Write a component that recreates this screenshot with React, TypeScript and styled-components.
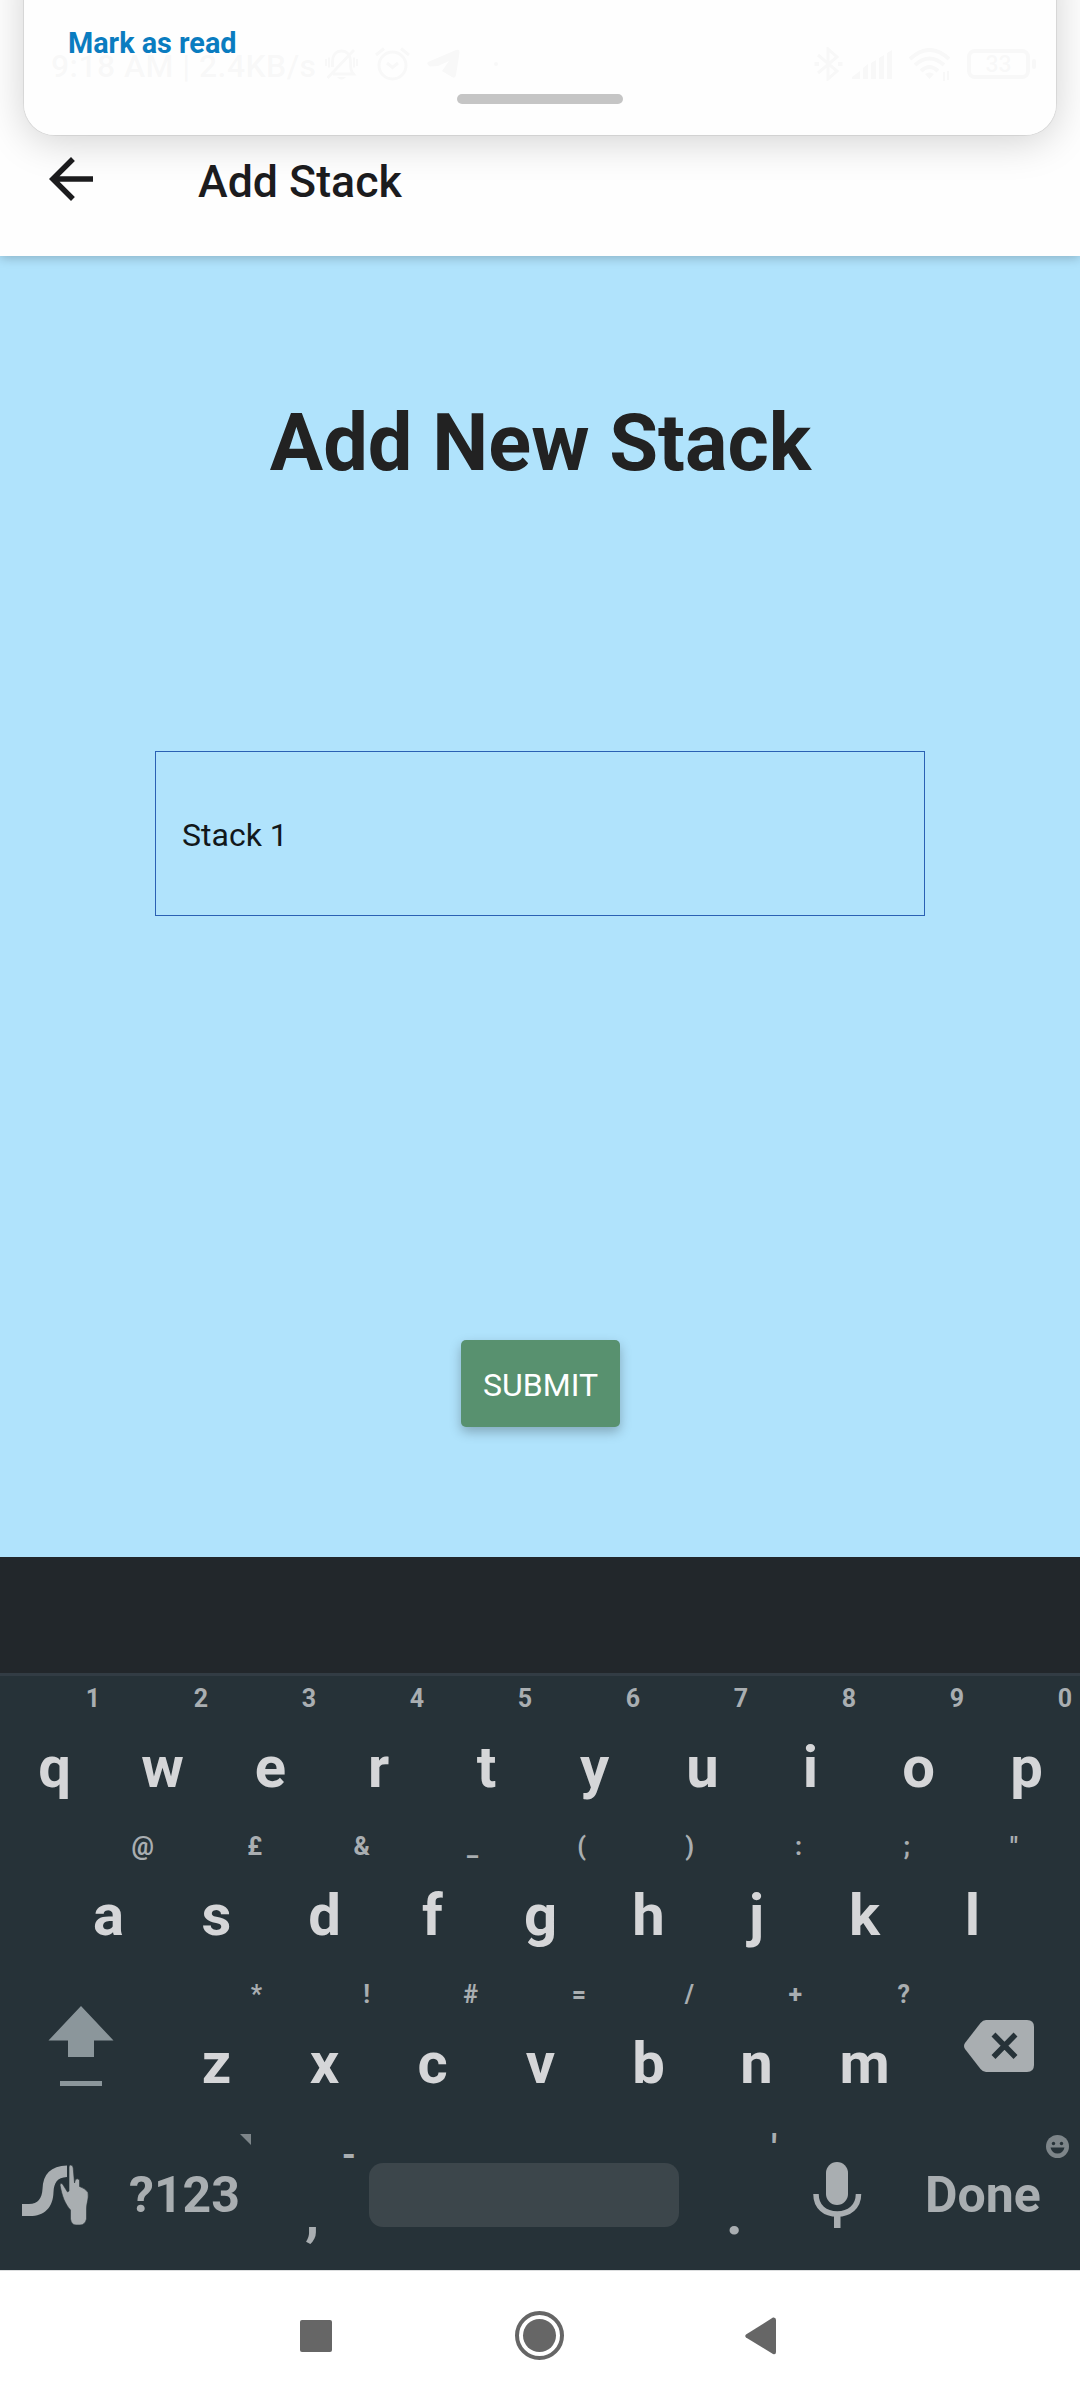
import React from 'react';
import styled, { createGlobalStyle } from 'styled-components';

const GlobalStyle = createGlobalStyle`
  * { box-sizing: border-box; }
  html, body { margin: 0; padding: 0; background: #fff; }
  body { font-family: Roboto, "Liberation Sans", sans-serif; }
`;

const Screen = styled.div`
  position: relative;
  width: 1080px;
  height: 2400px;
  display: flex;
  flex-direction: column;
  overflow: hidden;
  background: #fff;
`;

/* ---------- header ---------- */

const Header = styled.header`
  flex: none;
  height: 256px;
  z-index: 1;
  background: #fefefe;
  box-shadow: 0 2px 10px rgba(0, 0, 0, 0.22);
`;

const StatusBar = styled.div`
  height: 102px;
  padding: 26px 45px 0 51px;
  display: flex;
  align-items: center;
  justify-content: space-between;
  color: #222;
`;

const StatusGroup = styled.div`
  display: flex;
  align-items: center;
`;

const Clock = styled.span`
  width: 274px;
  font-size: 32px;
  line-height: 40px;
  font-weight: 500;
  white-space: nowrap;
  padding-top: 4px;
  letter-spacing: 0.4px;
`;

const StatusIcon = styled.svg<{ $gap?: number }>`
  display: block;
  flex: none;
  margin-left: ${(p) => p.$gap ?? 0}px;
`;

const Battery = styled.span`
  position: relative;
  width: 63px;
  height: 30px;
  margin: 0 5px 0 16px;
  border: 4px solid #222;
  border-radius: 8px;
  font-size: 23px;
  line-height: 24px;
  font-weight: 500;
  text-align: center;

  &::after {
    content: '';
    position: absolute;
    right: -10px;
    top: 6px;
    width: 4px;
    height: 10px;
    border-radius: 2px;
    background: #222;
  }
`;

const Toolbar = styled.div`
  height: 154px;
  padding-left: 38px;
  display: flex;
  align-items: center;
`;

const Title = styled.h2`
  margin: 5px 0 0 94px;
  font-size: 44.7px;
  line-height: 56px;
  font-weight: 500;
  color: #1c1c1e;
`;

/* Notification shade sliding over the status bar */
const Shade = styled.div`
  position: absolute;
  z-index: 2;
  left: 24px;
  top: -60px;
  width: 1032px;
  height: 195px;
  padding: 77px 16px 24px;
  border-radius: 31px;
  background: rgba(254, 254, 254, 0.972);
  box-shadow: 0 0 0 1px rgba(0, 0, 0, 0.07), 0 6px 40px rgba(0, 0, 0, 0.18);
`;

const ShadeAction = styled.div`
  padding-left: 28px;
  margin-top: 8px;
  font-size: 28.8px;
  line-height: 36px;
  font-weight: 700;
  color: #0a7cc0;
`;

const Handle = styled.div`
  width: 166px;
  height: 10px;
  margin: 33px auto 0;
  border-radius: 5px;
  background: #c5c5c5;
`;

/* ---------- form ---------- */

const Form = styled.main`
  flex: none;
  height: 1301px;
  padding-top: 137px;
  display: flex;
  flex-direction: column;
  align-items: center;
  background: #b0e3fc;
`;

const Heading = styled.h1`
  margin: 0 0 0 1px;
  font-size: 79.4px;
  line-height: 100px;
  font-weight: 700;
  color: #222;
`;

const Field = styled.div`
  width: 770px;
  height: 165px;
  margin-top: 258px;
  padding: 2px 0 0 26px;
  display: flex;
  align-items: center;
  border: 1px solid #2a61b4;
  font-size: 32px;
  line-height: 40px;
  color: #12181b;
`;

const Submit = styled.button`
  width: 159px;
  height: 87px;
  margin: 424px 0 0 1px;
  padding: 2px 0 0;
  border: 0;
  border-radius: 5px;
  background: #58916f;
  box-shadow: 0 5px 12px rgba(0, 0, 0, 0.26);
  font: 400 32px/40px Roboto, "Liberation Sans", sans-serif;
  color: #fff;
`;

/* ---------- keyboard ---------- */

const Keyboard = styled.section`
  flex: none;
  height: 713px;
  background: #263238;
  color: #a9aeb1;
`;

const Suggestions = styled.div`
  height: 119px;
  background: #22272b;
  border-bottom: 3px solid #323c44;
`;

const KeyRows = styled.div`
  margin-top: -2px;
`;

const KeyRow = styled.div<{ $inset?: number }>`
  height: 148px;
  padding: 0 ${(p) => p.$inset ?? 0}px;
  display: flex;
`;

const Key = styled.div`
  width: 108px;
  height: 148px;
  padding-top: 10px;
  display: flex;
  flex-direction: column;
`;

const Hint = styled.span`
  height: 30px;
  padding-right: 8px;
  text-align: right;
  font-size: 25px;
  line-height: 30px;
  font-weight: 700;
`;

const Letter = styled.span`
  margin-top: 19px;
  padding-left: 1px;
  text-align: center;
  font-size: 58px;
  line-height: 68px;
  font-weight: 700;
  color: #d5d6d8;
`;

const IconKey = styled.div<{ $w: number; $top: number; $left: number }>`
  flex: none;
  width: ${(p) => p.$w}px;
  padding: ${(p) => p.$top}px 0 0 ${(p) => p.$left}px;

  svg { display: block; }
`;

const WordKey = styled.div<{ $w: number }>`
  flex: none;
  width: ${(p) => p.$w}px;
  height: 148px;
  padding-top: 16px;
`;

const WordHint = styled.div`
  height: 31px;
  display: flex;
  justify-content: flex-end;
  align-items: flex-start;
`;

const Word = styled.div<{ $left: number }>`
  padding-left: ${(p) => p.$left}px;
  font-size: 50px;
  line-height: 60px;
  font-weight: 700;
`;

const PunctKey = styled.div<{ $w: number }>`
  flex: none;
  width: ${(p) => p.$w}px;
  height: 148px;
  font-weight: 700;
`;

const PunctHint = styled.div<{ $top: number; $right: number }>`
  height: 62px;
  padding: ${(p) => p.$top}px ${(p) => p.$right}px 0 0;
  text-align: right;
  font-size: 36px;
  line-height: 42px;
`;

const Punct = styled.div<{ $left: number }>`
  padding-left: ${(p) => p.$left}px;
  font-size: 58px;
  line-height: 68px;
`;

const SpaceBar = styled.div`
  width: 310px;
  height: 64px;
  border-radius: 14px;
  background: #3c464b;
`;

/* ---------- navigation ---------- */

const NavBar = styled.nav`
  flex: none;
  height: 130px;
  padding: 0 304px 0 300px;
  border-top: 1px solid #dcdedf;
  display: flex;
  align-items: center;
  justify-content: space-between;
  background: #fff;
`;

const topKeys = ['q1', 'w2', 'e3', 'r4', 't5', 'y6', 'u7', 'i8', 'o9', 'p0'];
const homeKeys = ['a@', 's£', 'd&', 'f_', 'g(', 'h)', 'j:', 'k;', 'l"'];
const bottomKeys = ['z*', 'x!', 'c#', 'v=', 'b/', 'n+', 'm?'];

const Keys = ({ keys }: { keys: string[] }) => (
  <>
    {keys.map(([letter, hint]) => (
      <Key key={letter}>
        <Hint>{hint}</Hint>
        <Letter>{letter}</Letter>
      </Key>
    ))}
  </>
);

export default function App() {
  return (
    <>
      <GlobalStyle />
      <Screen>
        <Header>
          <StatusBar>
            <StatusGroup>
              <Clock>9:18 AM | 2.4KB/s</Clock>
              <StatusIcon width="33" height="33" viewBox="0 0 33 33" fill="none" stroke="currentColor" strokeWidth="2.800">
                <path d="M8 26H28.500C26 23 25.500 21 25.500 14C25.500 7 22 3 16.500 3C11 3 7.500 7 7.500 14V19M29 2L2.500 30" />
                <path d="M1 11V18M4 9.500V19.500M32 11V18M29 9.500V19.500" strokeWidth="1.800" />
                <path d="M12 29H21Q16.500 34 12 29Z" fill="currentColor" stroke="none" />
              </StatusIcon>
              <StatusIcon $gap={17} width="35" height="34" viewBox="0 0 35 34" fill="none" stroke="currentColor" strokeWidth="3">
                <circle cx="17.500" cy="18.500" r="13.500" />
                <path d="M1 8L9 1.500M34 8L26 1.500M12 16L17.500 20.500L23 16" />
              </StatusIcon>
              <StatusIcon $gap={17} width="38" height="30" viewBox="0 0 38 30" fill="currentColor">
                <path d="M1 13L29 1Q33 -0.500 32.500 4L29 26Q28 30 25 28L15 22L22 12L11 17L3 17.500Q-1 15.500 1 13Z" />
              </StatusIcon>
              <StatusIcon $gap={29} width="4" height="4" viewBox="0 0 4 4" fill="currentColor">
                <circle cx="2" cy="2" r="2" />
              </StatusIcon>
            </StatusGroup>
            <StatusGroup>
              <StatusIcon width="29" height="34" viewBox="0 0 29 34" fill="none" stroke="currentColor" strokeWidth="3">
                <path d="M4 8L23 24L14 32V2L23 10L4 26" />
                <path d="M0.500 17H5M24 17H28.500" strokeWidth="4" />
              </StatusIcon>
              <StatusIcon $gap={9} width="41" height="29" viewBox="0 0 41 29" fill="currentColor">
                <path d="M0 29V27L8 21V29ZM11 29V18L16 14V29ZM19 29V13L24 10V29ZM27 29V8L32 5V29ZM35 29V3L40 0V29Z" />
              </StatusIcon>
              <StatusIcon $gap={16} width="42" height="33" viewBox="0 0 42 33" fill="none" stroke="currentColor" strokeWidth="4">
                <path d="M1 11Q20.500 -7 40 11M6 17Q20.500 4 35 17M12 23Q20.500 15 29 23" />
                <path d="M16 26Q20.500 23 25 26L20.500 31Z" fill="currentColor" stroke="none" />
                <path d="M35 24V33M39 23V32" strokeWidth="2" />
              </StatusIcon>
              <Battery>33</Battery>
            </StatusGroup>
          </StatusBar>
          <Toolbar>
            <svg width="66" height="66" viewBox="0 0 24 24" fill="#1c1c1e">
              <path d="M20 11H7.830l5.590-5.590L12 4l-8 8 8 8 1.410-1.410L7.830 13H20v-2z" />
            </svg>
            <Title>Add Stack</Title>
          </Toolbar>
        </Header>

        <Form>
          <Heading>Add New Stack</Heading>
          <Field>Stack 1</Field>
          <Submit>SUBMIT</Submit>
        </Form>

        <Keyboard>
          <Suggestions />
          <KeyRows>
            <KeyRow>
              <Keys keys={topKeys} />
            </KeyRow>
            <KeyRow $inset={54}>
              <Keys keys={homeKeys} />
            </KeyRow>
            <KeyRow>
              <IconKey $w={162} $top={36} $left={48}>
                <svg width="66" height="81" viewBox="0 0 66 81" fill="#8b969b">
                  <path d="M33 0L65.500 34.500H46V51H20V34.500H0.500ZM12 75H54V80H12Z" />
                </svg>
              </IconKey>
              <Keys keys={bottomKeys} />
              <IconKey $w={162} $top={50} $left={46}>
                <svg width="70" height="52" viewBox="0 0 70 52">
                  <path
                    d="M22 0H63Q70 0 70 7V45Q70 52 63 52H22Q19 52 16.500 49L1 29Q-1 26 1 23L16.500 3Q19 0 22 0Z"
                    fill="#a9aeb1"
                  />
                  <path d="M29.500 14.500L51.500 37M51.500 14.500L29.500 37" stroke="#263238" strokeWidth="5.500" />
                </svg>
              </IconKey>
            </KeyRow>
            <KeyRow>
              <IconKey $w={108} $top={47} $left={22}>
                <svg width="67" height="60" viewBox="0 0 67 60" fill="#a9aeb1">
                  <path d="M0 39H7C16 39 20 33 20.500 24C21 9 29 1 45 0.500V12C35 12.500 32 18 31.500 27C31 43 22 51 8 51H0Z" />
                  <path
                    d="M48.500 0Q51 0 51.200 3L52.500 18L53.500 14.500Q55.500 13 57.500 15V21.500Q63 23 66 27.500C67 34 64.500 38 64.500 44V54Q63 60 58 60H54Q49.500 60 48.500 54V45C43 39 40 31 38 20Q38.500 17 40.500 19L45.500 27L47 26V2Q47 0 48.500 0Z"
                    stroke="#263238"
                    strokeWidth="0.600"
                  />
                </svg>
              </IconKey>
              <WordKey $w={143}>
                <WordHint>
                  <svg width="11" height="11" viewBox="0 0 11 11" fill="#7d8589">
                    <path d="M0 0H11V11Z" />
                  </svg>
                </WordHint>
                <Word $left={21}>?123</Word>
              </WordKey>
              <PunctKey $w={105}>
                <PunctHint $top={16} $right={0}>-</PunctHint>
                <Punct $left={54}>,</Punct>
              </PunctKey>
              <IconKey $w={322} $top={45} $left={13}>
                <SpaceBar />
              </IconKey>
              <PunctKey $w={102}>
                <PunctHint $top={10} $right={3}>'</PunctHint>
                <Punct $left={48}>.</Punct>
              </PunctKey>
              <IconKey $w={120} $top={44} $left={33}>
                <svg width="49" height="66" viewBox="0 0 49 66">
                  <rect x="13" y="0" width="22" height="43" rx="11" fill="#a9aeb1" />
                  <path d="M3 32C3 45 12 52 24.300 52C36 52 45.500 45 45.500 32" fill="none" stroke="#a9aeb1" strokeWidth="5.500" />
                  <path d="M21 53H27.500V66H21Z" fill="#a9aeb1" />
                </svg>
              </IconKey>
              <WordKey $w={169}>
                <WordHint>
                  <svg width="23" height="24" viewBox="0 -1 23 24">
                    <circle cx="11.500" cy="11.500" r="11.500" fill="#7d8589" />
                    <circle cx="7.500" cy="8.500" r="1.700" fill="#263238" />
                    <circle cx="15.500" cy="8.500" r="1.700" fill="#263238" />
                    <path d="M4.500 12.500H18.500Q17 18.500 11.500 18.500Q6 18.500 4.500 12.500Z" fill="#263238" />
                  </svg>
                </WordHint>
                <Word $left={25}>Done</Word>
              </WordKey>
            </KeyRow>
          </KeyRows>
        </Keyboard>

        <NavBar>
          <svg width="33" height="32" viewBox="0 0 33 32" fill="#666">
            <rect width="32" height="32" rx="2" />
          </svg>
          <svg width="49" height="49" viewBox="0 0 49 49">
            <circle cx="24.500" cy="24.500" r="22.500" fill="none" stroke="#666" strokeWidth="4" />
            <circle cx="24.500" cy="24.500" r="16.500" fill="#666" />
          </svg>
          <svg width="31" height="38" viewBox="0 0 31 38" fill="#666">
            <path d="M1 17.500L28 0.500Q31 0 31 3V35Q31 38 28 37L1 20.500Q-0.500 19 1 17.500Z" />
          </svg>
        </NavBar>

        <Shade>
          <ShadeAction>Mark as read</ShadeAction>
          <Handle />
        </Shade>
      </Screen>
    </>
  );
}
